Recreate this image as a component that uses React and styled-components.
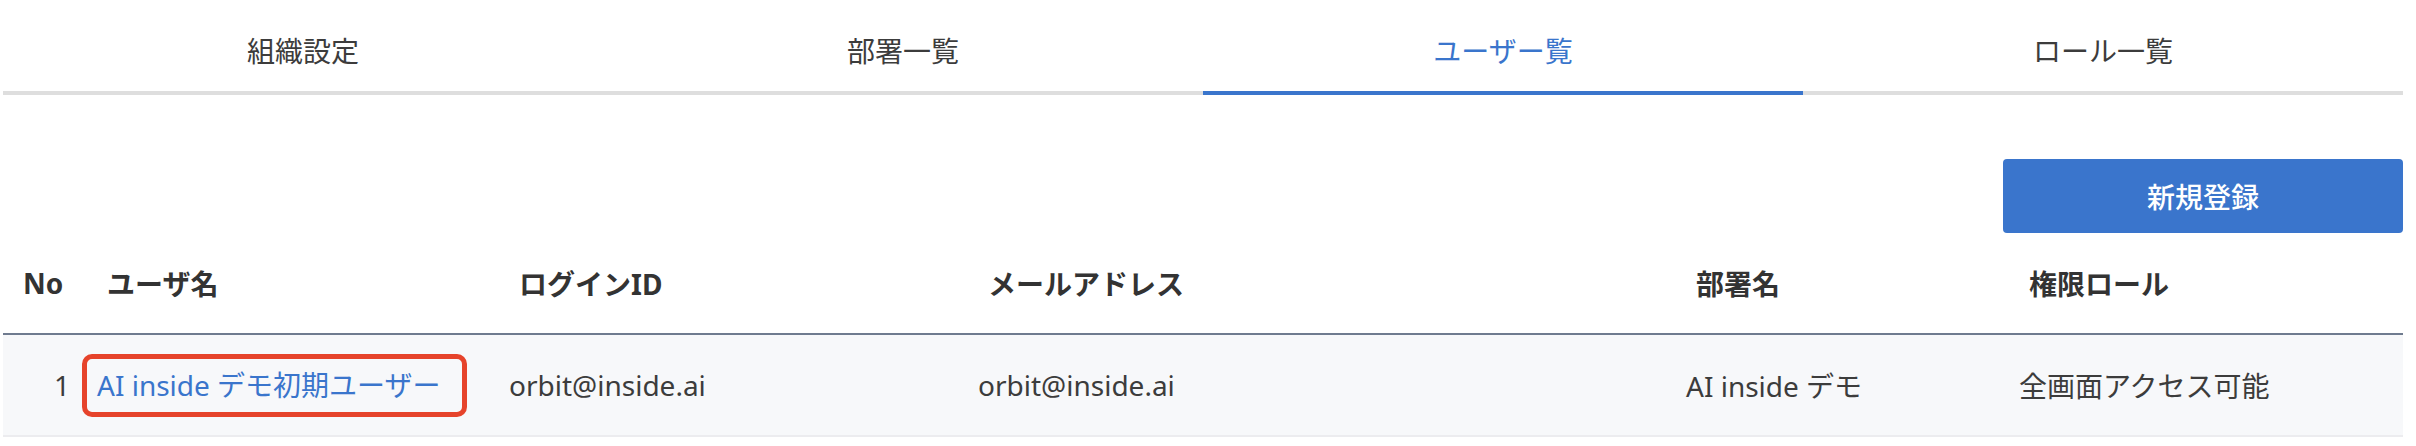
import styled, { createGlobalStyle } from 'styled-components';

const GlobalStyle = createGlobalStyle`
  body {
    margin: 0;
    background: #fff;
    font-family: "Noto Sans", "Noto Sans CJK JP", sans-serif;
    color: #3c3c3c;
  }
`;

const blue = '#3a75cc';

const StyledPage = styled.div`
  width: 2400px;
  margin-left: 3px;
`;

const StyledTabs = styled.nav`
  display: grid;
  grid-template-columns: repeat(4, 1fr);
`;

const StyledTab = styled.div`
  padding: 37px 0 26px;
  font-size: 28px;
  line-height: 28px;
  text-align: center;
  color: ${({ $active }) => ($active ? blue : '#3c3c3c')};
  border-bottom: 4px solid ${({ $active }) => ($active ? blue : '#dedede')};
`;

const StyledActions = styled.div`
  display: flex;
  justify-content: flex-end;
  padding-top: 64px;
`;

const StyledButton = styled.button`
  width: 400px;
  height: 74px;
  border: none;
  border-radius: 4px;
  background: ${blue};
  color: #fff;
  font-family: inherit;
  font-size: 28px;
  font-weight: 500;
  cursor: pointer;
`;

const StyledTable = styled.div`
  display: grid;
  grid-template-columns: 94px 412px 469px 708px 333px 384px;
`;

const StyledHeadCell = styled.div`
  height: 100px;
  display: flex;
  align-items: center;
  padding-left: ${({ $first }) => ($first ? '20px' : '10px')};
  font-size: 28px;
  font-weight: 700;
  color: #333;
  border-bottom: 2px solid #6f7b8f;
`;

const StyledCell = styled.div`
  height: 100px;
  display: flex;
  align-items: center;
  justify-content: ${({ $right }) => ($right ? 'flex-end' : 'flex-start')};
  padding-right: ${({ $right }) => ($right ? '27px' : '0')};
  font-size: 28px;
  color: #3c3c3c;
  background: #f7f8fa;
  border-bottom: 2px solid #ececef;
`;

const StyledUserLink = styled.a`
  margin-left: -15px;
  padding: 8px 21px 9px 10px;
  border: 5px solid #e6432b;
  border-radius: 10px;
  color: ${blue};
  text-decoration: none;
  line-height: 36px;
`;

const tabs = ['組織設定', '部署一覧', 'ユーザ一覧', 'ロール一覧'];
const columns = ['No', 'ユーザ名', 'ログインID', 'メールアドレス', '部署名', '権限ロール'];

const users = [
  {
    no: 1,
    name: 'AI inside デモ初期ユーザー',
    loginId: 'orbit@inside.ai',
    email: 'orbit@inside.ai',
    department: 'AI inside デモ',
    role: '全画面アクセス可能',
  },
];

const App = () => (
  <>
    <GlobalStyle />
    <StyledPage>
      <StyledTabs>
        {tabs.map((tab) => (
          <StyledTab key={tab} $active={tab === 'ユーザ一覧'}>
            {tab === 'ユーザ一覧' ? 'ユーザー覧' : tab}
          </StyledTab>
        ))}
      </StyledTabs>
      <StyledActions>
        <StyledButton>新規登録</StyledButton>
      </StyledActions>
      <StyledTable>
        {columns.map((col, i) => (
          <StyledHeadCell key={col} $first={i === 0}>
            {col}
          </StyledHeadCell>
        ))}
        {users.map((user) => (
          <div key={user.no} style={{ display: 'contents' }}>
            <StyledCell $right>{user.no}</StyledCell>
            <StyledCell>
              <StyledUserLink href="#">{user.name}</StyledUserLink>
            </StyledCell>
            <StyledCell>{user.loginId}</StyledCell>
            <StyledCell>{user.email}</StyledCell>
            <StyledCell>{user.department}</StyledCell>
            <StyledCell>{user.role}</StyledCell>
          </div>
        ))}
      </StyledTable>
    </StyledPage>
  </>
);

export default App;
